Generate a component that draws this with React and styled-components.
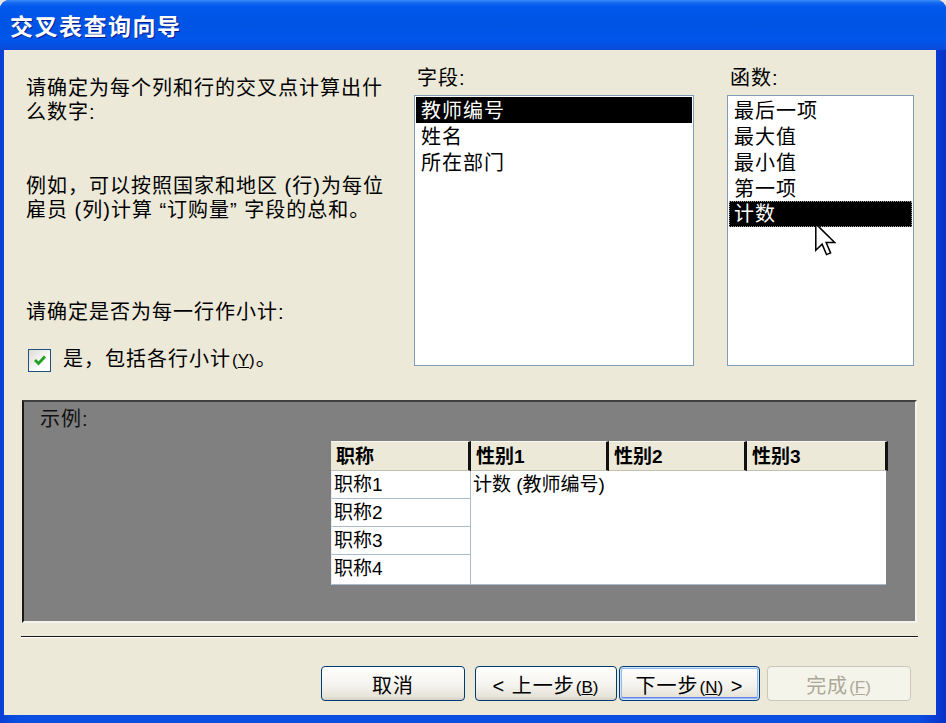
import React from "react";
import styled, { createGlobalStyle, css } from "styled-components";

const FONT = `"Liberation Sans", "Noto Sans CJK SC", sans-serif`;

const GlobalStyle = createGlobalStyle`
  html, body {
    margin: 0;
    padding: 0;
    background: #e6e6e6;
  }
  #root {
    width: 946px;
    height: 723px;
  }
`;

export default function App() {
  return (
    <>
      <GlobalStyle />
      <Window>
        <TitleBar>
          <TitleText>交叉表查询向导</TitleText>
        </TitleBar>
        <Body>
          <TopRow>
            <Instructions>
              <Para $top={10}>
                请确定为每个列和行的交叉点计算出什
                <br />
                么数字:
              </Para>
              <Para $top={50}>
                例如，可以按照国家和地区 (行)为每位
                <br />
                雇员 (列)计算 “订购量” 字段的总和。
              </Para>
              <Para $top={78}>请确定是否为每一行作小计:</Para>
              <CheckRow>
                <CheckBox>
                  <svg width="16" height="16" viewBox="0 0 16 16">
                    <path
                      d="M3 8 L6.5 11.5 L13 4.5"
                      fill="none"
                      stroke="#21a121"
                      strokeWidth="2.8"
                    />
                  </svg>
                </CheckBox>
                <span>
                  是，包括各行小计
                  <Mnemonic>
                    (<u>Y</u>)
                  </Mnemonic>
                  。
                </span>
              </CheckRow>
            </Instructions>

            <ListColumn $width={280}>
              <ListLabel>字段:</ListLabel>
              <ListBox>
                <ListItem $selected>教师编号</ListItem>
                <ListItem>姓名</ListItem>
                <ListItem>所在部门</ListItem>
              </ListBox>
            </ListColumn>

            <ListColumn $width={187} $gap={33}>
              <ListLabel>函数:</ListLabel>
              <ListBox>
                <ListItem>最后一项</ListItem>
                <ListItem>最大值</ListItem>
                <ListItem>最小值</ListItem>
                <ListItem>第一项</ListItem>
                <ListItem $selected $focused>
                  计数
                </ListItem>
                <Cursor width="26" height="34" viewBox="0 0 13 20">
                  <path
                    d="M0.5 0.5 L0.5 16 L4.2 12.4 L6.8 18.6 L9.2 17.6 L6.6 11.5 L11.6 11.5 Z"
                    fill="#fff"
                    stroke="#000"
                    strokeWidth="0.9"
                    strokeLinejoin="miter"
                  />
                </Cursor>
              </ListBox>
            </ListColumn>
          </TopRow>

          <ExamplePanel>
            <ExampleLabel>示例:</ExampleLabel>
            <Crosstab>
              <HeadCell>职称</HeadCell>
              <HeadCell>性别1</HeadCell>
              <HeadCell>性别2</HeadCell>
              <HeadCell>性别3</HeadCell>
              <RowCell $row={2}>职称1</RowCell>
              <ValueCell>计数 (教师编号)</ValueCell>
              <RowCell $row={3}>职称2</RowCell>
              <RowCell $row={4}>职称3</RowCell>
              <RowCell $row={5}>职称4</RowCell>
            </Crosstab>
          </ExamplePanel>

          <Separator />

          <ButtonRow>
            <WizardButton $w={144}>取消</WizardButton>
            <WizardButton $w={142} $ml={10}>
              &lt; 上一步
              <Mnemonic>
                (<u>B</u>)
              </Mnemonic>
            </WizardButton>
            <WizardButton $w={141} $ml={2} $default>
              下一步
              <Mnemonic>
                (<u>N</u>)
              </Mnemonic>{" "}
              &gt;
            </WizardButton>
            <WizardButton $w={144} $ml={7} disabled>
              完成
              <Mnemonic>
                (<u>F</u>)
              </Mnemonic>
            </WizardButton>
          </ButtonRow>
        </Body>
      </Window>
    </>
  );
}

const Window = styled.div`
  width: 946px;
  height: 723px;
  display: flex;
  flex-direction: column;
  background: linear-gradient(90deg, #0a3fd4 0%, #0a4fe2 2%, #0a4fe2 97%, #0831c8 100%);
  border-radius: 9px 9px 0 0;
  overflow: hidden;
  font-family: ${FONT};
  color: #000;
`;

const TitleBar = styled.div`
  height: 50px;
  flex: none;
  display: flex;
  align-items: center;
  padding-left: 10px;
  background: linear-gradient(
    #3d8cf7 0%,
    #1468f0 6%,
    #0058ee 14%,
    #0054e3 45%,
    #0156ec 80%,
    #0a4ad8 100%
  );
`;

const TitleText = styled.span`
  font-size: 23px;
  font-weight: 700;
  letter-spacing: 1.5px;
  color: #fff;
  text-shadow: 1px 1px 0 #0a1c8a;
`;

const Body = styled.div`
  flex: 1;
  margin: 0 10px 8px 4px;
  background: #ece9d8;
  padding: 16px 19px 0 18px;
  display: flex;
  flex-direction: column;
  font-size: 20px;
  letter-spacing: 1px;
`;

const TopRow = styled.div`
  display: flex;
  height: 300px;
`;

const Instructions = styled.div`
  width: 392px;
  padding-left: 4px;
  box-sizing: border-box;
  display: flex;
  flex-direction: column;
`;

const Para = styled.p`
  margin: ${(p) => p.$top}px 0 0;
  line-height: 24px;
  white-space: nowrap;
`;

const CheckRow = styled.div`
  display: flex;
  align-items: center;
  gap: 12px;
  margin-top: 24px;
  height: 24px;
  line-height: 24px;
`;

const CheckBox = styled.span`
  width: 23px;
  height: 23px;
  margin-left: 2px;
  box-sizing: border-box;
  border: 1px solid #1c5180;
  background: linear-gradient(135deg, #dcdbd4, #ffffff 70%);
  display: flex;
  align-items: center;
  justify-content: center;
`;

const Mnemonic = styled.span`
  font-size: 17px;
  letter-spacing: 0;
  margin: 0 1px;
`;

const ListColumn = styled.div`
  width: ${(p) => p.$width}px;
  margin-left: ${(p) => p.$gap || 0}px;
  display: flex;
  flex-direction: column;
`;

const ListLabel = styled.div`
  height: 22px;
  line-height: 20px;
  padding-top: 2px;
  box-sizing: border-box;
  margin-bottom: 7px;
  padding-left: 3px;
`;

const ListBox = styled.div`
  position: relative;
  height: 271px;
  box-sizing: border-box;
  border: 1px solid #7f9db9;
  background: #fff;
  padding: 1px;
`;

const ListItem = styled.div`
  height: 26px;
  line-height: 24px;
  padding: 2px 0 0 5px;
  box-sizing: border-box;
  ${(p) =>
    p.$selected &&
    css`
      background: #000;
      color: #fff;
    `}
  ${(p) =>
    p.$focused &&
    css`
      border: 1px dotted #9a9a9a;
      padding: 2px 0 0 4px;
      line-height: 21px;
    `}
`;

const Cursor = styled.svg`
  position: absolute;
  left: 85px;
  top: 127px;
`;

const ExamplePanel = styled.div`
  margin-top: 34px;
  height: 223px;
  box-sizing: border-box;
  background: #808080;
  border-top: 2px solid #404040;
  border-left: 2px solid #1a1a1a;
  border-right: 2px solid #f4f3ee;
  border-bottom: 2px solid #f4f3ee;
  padding-top: 6px;
`;

const ExampleLabel = styled.div`
  line-height: 22px;
  padding-left: 16px;
  color: #111;
`;

const Crosstab = styled.div`
  display: grid;
  grid-template-columns: 140px 138px 138px 141px;
  grid-template-rows: 30px 28px 28px 28px 30px;
  width: 557px;
  margin: 11px 0 0 307px;
  font-size: 19px;
  letter-spacing: 0;
`;

const HeadCell = styled.div`
  background: #ece9d8;
  font-weight: 700;
  line-height: 26px;
  padding: 2px 0 0 5px;
  box-sizing: border-box;
  border-top: 1px solid #f8f7f2;
  border-bottom: 1px solid #c4c0b0;
  border-right: 3px solid #111;
`;

const RowCell = styled.div`
  grid-column: 1;
  grid-row: ${(p) => p.$row};
  background: #fff;
  line-height: 24px;
  padding: 2px 0 0 2px;
  box-sizing: border-box;
  border: 1px solid #a9bacb;
  border-top: none;
  border-left-color: #e8eef4;
`;

const ValueCell = styled.div`
  grid-column: 2 / 5;
  grid-row: 2 / 6;
  margin-right: 2px;
  background: #fff;
  line-height: 24px;
  padding: 2px 0 0 2px;
  border-bottom: 1px solid #a9bacb;
`;

const Separator = styled.div`
  margin: 13px -1px 0;
  border-top: 1px solid #1a1a1a;
  border-bottom: 1px solid #fff;
`;

const ButtonRow = styled.div`
  margin-top: 28px;
  display: flex;
  justify-content: flex-end;
  padding-right: 6px;
`;

const WizardButton = styled.button`
  width: ${(p) => p.$w}px;
  height: 35px;
  margin-left: ${(p) => p.$ml || 0}px;
  padding: 2px 0 0;
  border: 1px solid #003c74;
  border-radius: 4px;
  background: linear-gradient(#ffffff 0%, #f4f3ee 55%, #e6e3d8 90%, #d6d0c5 100%);
  font-family: ${FONT};
  font-size: 20px;
  letter-spacing: 1px;
  color: #000;
  white-space: nowrap;
  ${(p) =>
    p.$default &&
    css`
      box-shadow: inset 0 0 0 1px #cee7ff, inset 0 0 0 2px #98b8ea,
        inset 0 -1px 0 2px #6982ee;
    `}
  &:disabled {
    border-color: #c9c7ba;
    color: #aca899;
    background: #f5f4ea;
  }
`;
